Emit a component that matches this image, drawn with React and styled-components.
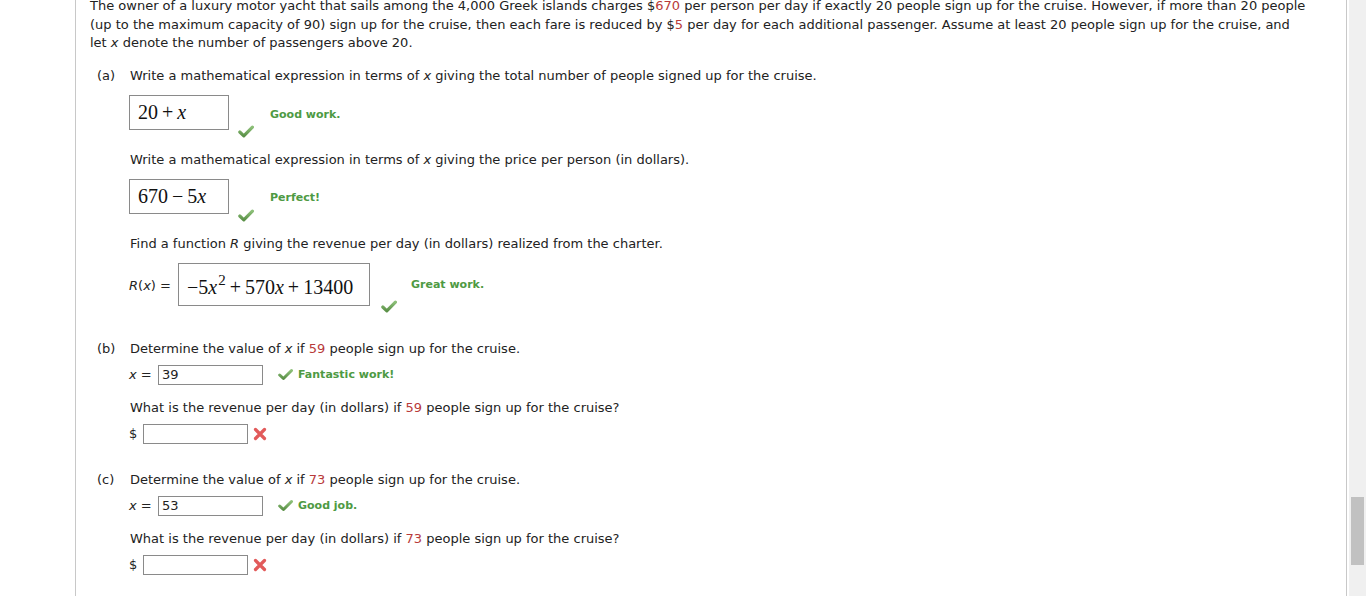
import styled, { createGlobalStyle } from "styled-components";

const GlobalStyle = createGlobalStyle`
  html, body {
    margin: 0;
    padding: 0;
    background: #fff;
    overflow: hidden;
  }
  body {
    font-family: "DejaVu Sans", Verdana, sans-serif;
    font-size: 13px;
    color: #222;
  }
`;

const Page = styled.div`
  display: flex;
  width: 1366px;
  height: 596px;
  overflow: hidden;
`;

const Content = styled.div`
  flex: 1;
  padding-left: 75px;
`;

const Panel = styled.div`
  width: 1256px;
  height: 600px;
  border-left: 1px solid #c8c8c8;
  border-right: 1px solid #c8c8c8;
  padding-left: 14px;
  box-sizing: content-box;
`;

const Scrollbar = styled.div`
  width: 17px;
  background: #f0f0f0;
  position: relative;
`;

const Thumb = styled.div`
  position: absolute;
  left: 2px;
  width: 13px;
  top: 497px;
  height: 68px;
  background: #c1c1c1;
`;

const Intro = styled.div`
  margin-top: -3px;
  line-height: 18.5px;
  white-space: nowrap;
`;

const Line = styled.span`
  display: block;
`;

const Num = styled.span`
  color: #b83a3a;
`;

const Var = styled.i`
  font-style: italic;
`;

const Part = styled.div`
  display: grid;
  grid-template-columns: 33px 1fr;
  padding-left: 7px;
  margin-top: ${(p) => p.$top}px;
`;

const Label = styled.div`
  line-height: 18px;
`;

const Body = styled.div`
  display: flex;
  flex-direction: column;
`;

const Question = styled.div`
  line-height: 18px;
  white-space: nowrap;
  margin-top: ${(p) => p.$top || 0}px;
`;

const AnswerRow = styled.div`
  display: flex;
  align-items: flex-start;
  margin-left: -1px;
  margin-top: ${(p) => p.$top}px;
`;

const RLabel = styled.div`
  line-height: 18px;
  margin-top: 14px;
  width: 49px;
  flex: none;
`;

const MathBox = styled.div`
  width: ${(p) => p.$w}px;
  height: ${(p) => p.$h}px;
  box-sizing: border-box;
  border: 1px solid #8a8a8a;
  padding-left: 8px;
  display: flex;
  align-items: ${(p) => (p.$tall ? "flex-end" : "center")};
  padding-bottom: ${(p) => (p.$tall ? 7 : 0)}px;
  font-family: "Liberation Serif", "Times New Roman", serif;
  font-size: 20px;
  color: #111;
  white-space: nowrap;
  flex: none;
`;

const Formula = styled.span`
  line-height: 22px;
`;

const Sup = styled.span`
  font-size: 15px;
  vertical-align: 9px;
  margin-left: 1px;
`;

const Op = styled.span`
  margin: 0 4px;
`;

const BigCheck = styled.div`
  margin-left: ${(p) => p.$left}px;
  margin-top: ${(p) => p.$top}px;
  width: 16px;
  height: 13px;
  flex: none;
`;

const Feedback = styled.div`
  color: #4e9a43;
  font-weight: bold;
  font-size: 11px;
  line-height: 14px;
  margin-left: ${(p) => p.$left}px;
  margin-top: ${(p) => p.$top || 0}px;
  white-space: nowrap;
`;

const InlineRow = styled.div`
  display: flex;
  align-items: center;
  height: 20px;
  margin-left: -1px;
  margin-top: ${(p) => p.$top}px;
`;

const InlineLabel = styled.span`
  width: ${(p) => p.$w}px;
  flex: none;
`;

const Input = styled.div`
  width: 105px;
  height: 20px;
  box-sizing: border-box;
  border: 1px solid #8a8a8a;
  padding-left: 3px;
  line-height: 18px;
  font-size: 13px;
  flex: none;
`;

const SmallIcon = styled.div`
  margin-left: ${(p) => p.$left}px;
  width: 15px;
  height: 13px;
  display: flex;
  align-items: center;
  flex: none;
`;

const Check = () => (
  <svg width="16" height="13" viewBox="0 0 16 13">
    <defs>
      <linearGradient id="cg" x1="0" y1="0" x2="0" y2="1">
        <stop offset="0" stopColor="#8cbf78" />
        <stop offset="1" stopColor="#5b9148" />
      </linearGradient>
    </defs>
    <path
      d="M1.8 7 L5.8 10.8 L14.4 2.2"
      fill="none"
      stroke="url(#cg)"
      strokeWidth="3.2"
      strokeLinecap="round"
      strokeLinejoin="round"
    />
  </svg>
);

const Cross = () => (
  <svg width="14" height="14" viewBox="0 0 14 14">
    <path
      d="M2.5 2.5 L11.5 11.5 M11.5 2.5 L2.5 11.5"
      fill="none"
      stroke="#e25a5a"
      strokeWidth="3.2"
      strokeLinecap="round"
    />
  </svg>
);

export default function App() {
  return (
    <>
      <GlobalStyle />
      <Page>
        <Content>
          <Panel>
            <Intro>
              <Line>
                The owner of a luxury motor yacht that sails among the 4,000 Greek islands charges $
                <Num>670</Num> per person per day if exactly 20 people sign up for the cruise. However, if more than 20 people
              </Line>
              <Line>
                (up to the maximum capacity of 90) sign up for the cruise, then each fare is reduced by $<Num>5</Num> per day
                for each additional passenger. Assume at least 20 people sign up for the cruise, and
              </Line>
              <Line>
                let <Var>x</Var> denote the number of passengers above 20.
              </Line>
            </Intro>

            <Part $top={14}>
              <Label>(a)</Label>
              <Body>
                <Question>
                  Write a mathematical expression in terms of <Var>x</Var> giving the total number of people signed up for
                  the cruise.
                </Question>
                <AnswerRow $top={10}>
                  <MathBox $w={100} $h={35}>
                    <Formula>
                      20<Op>+</Op>
                      <Var>x</Var>
                    </Formula>
                  </MathBox>
                  <BigCheck $left={9} $top={30}>
                    <Check />
                  </BigCheck>
                  <Feedback $left={16} $top={13}>
                    Good work.
                  </Feedback>
                </AnswerRow>

                <Question $top={13}>
                  Write a mathematical expression in terms of <Var>x</Var> giving the price per person (in dollars).
                </Question>
                <AnswerRow $top={10}>
                  <MathBox $w={100} $h={35}>
                    <Formula>
                      670<Op>−</Op>5<Var>x</Var>
                    </Formula>
                  </MathBox>
                  <BigCheck $left={9} $top={30}>
                    <Check />
                  </BigCheck>
                  <Feedback $left={16} $top={12}>
                    Perfect!
                  </Feedback>
                </AnswerRow>

                <Question $top={13}>
                  Find a function <Var>R</Var> giving the revenue per day (in dollars) realized from the charter.
                </Question>
                <AnswerRow $top={10}>
                  <RLabel>
                    <Var>R</Var>(<Var>x</Var>) =
                  </RLabel>
                  <MathBox $w={192} $h={43} $tall>
                    <Formula>
                      −5<Var>x</Var>
                      <Sup>2</Sup>
                      <Op>+</Op>570<Var>x</Var>
                      <Op>+</Op>13400
                    </Formula>
                  </MathBox>
                  <BigCheck $left={11} $top={37}>
                    <Check />
                  </BigCheck>
                  <Feedback $left={14} $top={15}>
                    Great work.
                  </Feedback>
                </AnswerRow>
              </Body>
            </Part>

            <Part $top={27}>
              <Label>(b)</Label>
              <Body>
                <Question>
                  Determine the value of <Var>x</Var> if <Num>59</Num> people sign up for the cruise.
                </Question>
                <InlineRow $top={7}>
                  <InlineLabel $w={29}>
                    <Var>x</Var> =
                  </InlineLabel>
                  <Input>39</Input>
                  <SmallIcon $left={15}>
                    <Check />
                  </SmallIcon>
                  <Feedback $left={5}>Fantastic work!</Feedback>
                </InlineRow>
                <Question $top={14}>
                  What is the revenue per day (in dollars) if <Num>59</Num> people sign up for the cruise?
                </Question>
                <InlineRow $top={7}>
                  <InlineLabel $w={14}>$</InlineLabel>
                  <Input />
                  <SmallIcon $left={5}>
                    <Cross />
                  </SmallIcon>
                </InlineRow>
              </Body>
            </Part>

            <Part $top={27}>
              <Label>(c)</Label>
              <Body>
                <Question>
                  Determine the value of <Var>x</Var> if <Num>73</Num> people sign up for the cruise.
                </Question>
                <InlineRow $top={7}>
                  <InlineLabel $w={29}>
                    <Var>x</Var> =
                  </InlineLabel>
                  <Input>53</Input>
                  <SmallIcon $left={15}>
                    <Check />
                  </SmallIcon>
                  <Feedback $left={5}>Good job.</Feedback>
                </InlineRow>
                <Question $top={14}>
                  What is the revenue per day (in dollars) if <Num>73</Num> people sign up for the cruise?
                </Question>
                <InlineRow $top={7}>
                  <InlineLabel $w={14}>$</InlineLabel>
                  <Input />
                  <SmallIcon $left={5}>
                    <Cross />
                  </SmallIcon>
                </InlineRow>
              </Body>
            </Part>
          </Panel>
        </Content>
        <Scrollbar>
          <Thumb />
        </Scrollbar>
      </Page>
    </>
  );
}
